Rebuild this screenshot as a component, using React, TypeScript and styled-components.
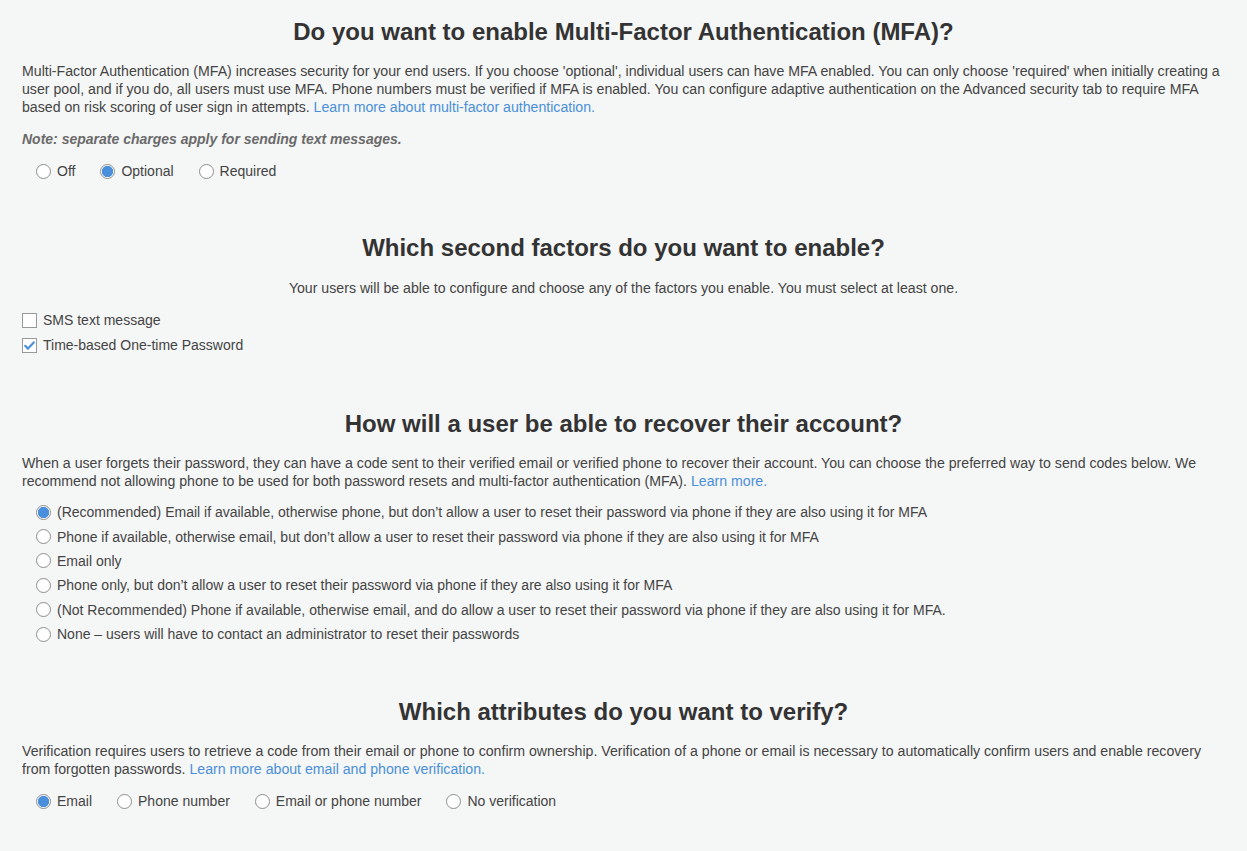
import React from "react";
import styled, { createGlobalStyle } from "styled-components";

const Global = createGlobalStyle`
  html, body { margin: 0; padding: 0; background: #f5f6f6; }
  body { font-family: "Liberation Sans", Arial, Helvetica, sans-serif; color: #444; }
`;

const Page = styled.div`
  padding: 18px 22px 40px 22px;
  box-sizing: border-box;
  width: 1247px;
`;

const Section = styled.section<{ $top?: number }>`
  margin-top: ${(p) => p.$top ?? 0}px;
`;

const Heading = styled.h2`
  margin: 0;
  font-size: 24px;
  line-height: 28px;
  font-weight: 700;
  color: #333;
  text-align: center;
`;

const Para = styled.p<{ $center?: boolean; $top?: number }>`
  margin: ${(p) => p.$top ?? 16}px 0 0 0;
  font-size: 14.15px;
  line-height: 18px;
  color: #444;
  text-align: ${(p) => (p.$center ? "center" : "left")};
`;

const Note = styled.p`
  margin: 14px 0 0 0;
  font-size: 14px;
  line-height: 18px;
  font-style: italic;
  font-weight: 700;
  color: #6a6a6a;
`;

const Link = styled.a`
  color: #4a90d9;
  text-decoration: none;
`;

const InlineGroup = styled.div`
  display: flex;
  align-items: center;
  gap: 25px;
  margin-top: 14px;
  padding-left: 14px;
  height: 18px;
`;

const StackGroup = styled.div<{ $indent: number; $row: number; $top: number }>`
  display: flex;
  flex-direction: column;
  margin-top: ${(p) => p.$top}px;
  padding-left: ${(p) => p.$indent}px;
  & > label { height: ${(p) => p.$row}px; }
`;

const Option = styled.label`
  display: inline-flex;
  align-items: center;
  gap: 6px;
  font-size: 14px;
  color: #444;
  white-space: nowrap;
`;

const Radio = styled.span<{ $on?: boolean }>`
  width: 15px;
  height: 15px;
  border-radius: 50%;
  box-sizing: border-box;
  border: 1px solid #8e8e8e;
  background: ${(p) =>
    p.$on
      ? "radial-gradient(circle, #4a8fdb 0, #4a8fdb 5.3px, #ffffff 6px)"
      : "#fff"};
  flex: none;
`;

const Box = styled.span`
  width: 15px;
  height: 15px;
  box-sizing: border-box;
  border: 1px solid #999;
  background: #fff;
  flex: none;
  display: flex;
  align-items: center;
  justify-content: center;
`;

const Check = () => (
  <svg width="13" height="13" viewBox="0 0 13 13">
    <path d="M2.2 6.8 L5 9.6 L10.8 3.4" fill="none" stroke="#4a8fdb" strokeWidth="2.2" strokeLinecap="round" strokeLinejoin="round" />
  </svg>
);

const RadioOpt = ({ on, children }: { on?: boolean; children: React.ReactNode }) => (
  <Option>
    <Radio $on={on} />
    {children}
  </Option>
);

const CheckOpt = ({ on, children }: { on?: boolean; children: React.ReactNode }) => (
  <Option>
    <Box>{on ? <Check /> : null}</Box>
    {children}
  </Option>
);

export default function App() {
  return (
    <>
      <Global />
      <Page>
        <Section>
          <Heading>Do you want to enable Multi-Factor Authentication (MFA)?</Heading>
          <Para>
            Multi-Factor Authentication (MFA) increases security for your end users. If you choose 'optional', individual users can have MFA enabled. You can only choose 'required' when initially creating a user pool, and if you do, all users must use MFA. Phone numbers must be verified if MFA is enabled. You can configure adaptive authentication on the Advanced security tab to require MFA based on risk scoring of user sign in attempts.{" "}
            <Link href="#">Learn more about multi-factor authentication.</Link>
          </Para>
          <Note>Note: separate charges apply for sending text messages.</Note>
          <InlineGroup>
            <RadioOpt>Off</RadioOpt>
            <RadioOpt on>Optional</RadioOpt>
            <RadioOpt>Required</RadioOpt>
          </InlineGroup>
        </Section>

        <Section $top={54}>
          <Heading>Which second factors do you want to enable?</Heading>
          <Para $center $top={17}>
            Your users will be able to configure and choose any of the factors you enable. You must select at least one.
          </Para>
          <StackGroup $indent={0} $row={25} $top={10.5}>
            <CheckOpt>SMS text message</CheckOpt>
            <CheckOpt on>Time-based One-time Password</CheckOpt>
          </StackGroup>
        </Section>

        <Section $top={52.5}>
          <Heading>How will a user be able to recover their account?</Heading>
          <Para $top={16}>
            When a user forgets their password, they can have a code sent to their verified email or verified phone to recover their account. You can choose the preferred way to send codes below. We recommend not allowing phone to be used for both password resets and multi-factor authentication (MFA).{" "}
            <Link href="#">Learn more.</Link>
          </Para>
          <StackGroup $indent={14} $row={24.4} $top={10}>
            <RadioOpt on>(Recommended) Email if available, otherwise phone, but don’t allow a user to reset their password via phone if they are also using it for MFA</RadioOpt>
            <RadioOpt>Phone if available, otherwise email, but don’t allow a user to reset their password via phone if they are also using it for MFA</RadioOpt>
            <RadioOpt>Email only</RadioOpt>
            <RadioOpt>Phone only, but don’t allow a user to reset their password via phone if they are also using it for MFA</RadioOpt>
            <RadioOpt>(Not Recommended) Phone if available, otherwise email, and do allow a user to reset their password via phone if they are also using it for MFA.</RadioOpt>
            <RadioOpt>None – users will have to contact an administrator to reset their passwords</RadioOpt>
          </StackGroup>
        </Section>

        <Section $top={52}>
          <Heading>Which attributes do you want to verify?</Heading>
          <Para>
            Verification requires users to retrieve a code from their email or phone to confirm ownership. Verification of a phone or email is necessary to automatically confirm users and enable recovery from forgotten passwords.{" "}
            <Link href="#">Learn more about email and phone verification.</Link>
          </Para>
          <InlineGroup>
            <RadioOpt on>Email</RadioOpt>
            <RadioOpt>Phone number</RadioOpt>
            <RadioOpt>Email or phone number</RadioOpt>
            <RadioOpt>No verification</RadioOpt>
          </InlineGroup>
        </Section>
      </Page>
    </>
  );
}
